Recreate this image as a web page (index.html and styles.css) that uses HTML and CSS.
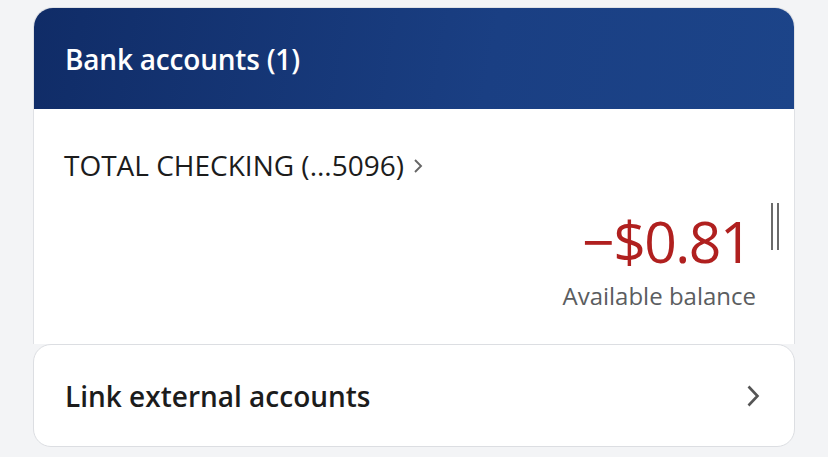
FILE: index.html
```html
<!DOCTYPE html>
<html lang="en">
<head>
    <meta charset="UTF-8">
    <meta name="viewport" content="width=device-width, initial-scale=1.0">
    <title>Bank accounts</title>
    <link rel="stylesheet" href="styles.css">
</head>
<body>
    <div class="card">
        <div class="card-header">
            <h2 class="card-title">Bank accounts (1)</h2>
        </div>
        <div class="account">
            <a class="account-name" href="#">
                TOTAL CHECKING (...5096)
                <svg class="chev-small" width="10" height="16" viewBox="0 0 10 16">
                    <path d="M2 2 L8 8 L2 14" fill="none" stroke="#666" stroke-width="1.9"/>
                </svg>
            </a>
            <div class="balance">
                <span class="amount">&minus;$0.81</span>
                <span class="balance-label">Available balance</span>
                <span class="grip"></span>
            </div>
        </div>
    </div>
    <a class="link-card" href="#">
        <span>Link external accounts</span>
        <svg class="chev" width="14" height="22" viewBox="0 0 14 22">
            <path d="M2.5 1.5 L11.5 11 L2.5 20.5" fill="none" stroke="#555" stroke-width="2.6"/>
        </svg>
    </a>
</body>
</html>
```

FILE: styles.css
```css
* {
    box-sizing: border-box;
    margin: 0;
    padding: 0;
}

body {
    font-family: "Open Sans", Arial, sans-serif;
    background-color: #f3f4f6;
    padding: 7px 33px 0;
}
a {
    text-decoration: none;
    color: inherit;
}
.card {
    background-color: #fff;
    border: 1px solid #dfe1e5;
    border-bottom: none;
    border-radius: 20px 20px 0 0;
    overflow: hidden;
}
.card-header {
    height: 101px;
    display: flex;
    align-items: center;
    padding: 0 31px;
    background: linear-gradient(100deg, #102c67 0%, #1a3f83 60%, #1c4489 100%);
}
.card-title {
    color: #fff;
    font-size: 28px;
    line-height: 38px;
    font-weight: 600;
    letter-spacing: -0.2px;
}
.account {
    height: 235px;
    padding: 37px 40px 0 30px;
}
.account-name {
    display: inline-flex;
    align-items: center;
    gap: 9px;
    font-size: 28px;
    line-height: 38px;
    color: #1c1c1c;
}
.chev-small {
    margin-top: 1px;
}
.balance {
    position: relative;
    display: flex;
    flex-direction: column;
    align-items: flex-end;
    margin-top: 22px;
}
.amount {
    font-size: 57px;
    line-height: 70px;
    color: #b0201f;
    letter-spacing: -1.5px;
    margin-right: 3px;
}
.balance-label {
    font-size: 24px;
    line-height: 30px;
    color: #5b5d60;
    margin-top: 5px;
    margin-right: -2px;
}
.grip {
    position: absolute;
    right: -25px;
    top: -3px;
    width: 8px;
    height: 47px;
    border-left: 2px solid #6b6b6b;
    border-right: 2px solid #6b6b6b;
}
.link-card {
    display: flex;
    align-items: center;
    justify-content: space-between;
    height: 103px;
    padding: 0 34px 0 31px;
    background-color: #fff;
    border: 1px solid #dcdee2;
    border-radius: 18px;
    font-size: 28px;
    font-weight: 600;
    color: #1c1c1c;
}
```
